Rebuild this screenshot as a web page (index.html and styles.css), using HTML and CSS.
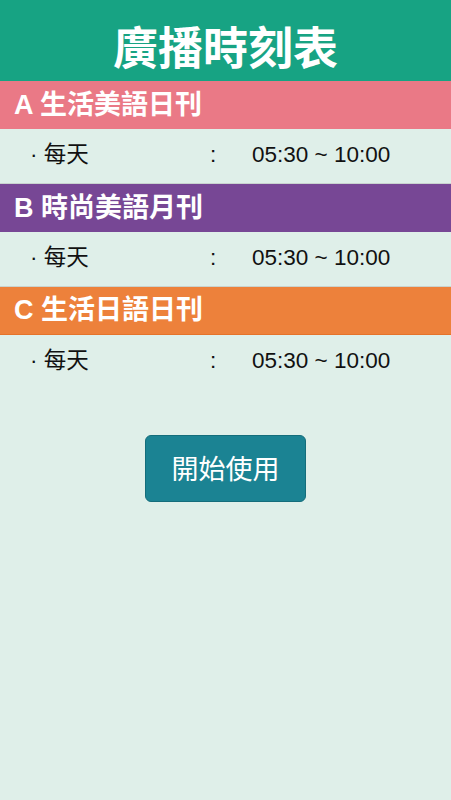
FILE: index.html
```html
<!DOCTYPE html>
<html lang="zh-Hant">
<head>
<meta charset="utf-8">
<title>廣播時刻表</title>
<link rel="stylesheet" href="styles.css">
</head>
<body>
<div class="page">
  <header class="header"><h1>廣播時刻表</h1></header>

  <section class="program">
    <h2 class="bar bar-a">A 生活美語日刊</h2>
    <div class="row"><span class="day">· 每天</span><span class="colon">:</span><span class="time">05:30 ~ 10:00</span></div>
  </section>

  <section class="program">
    <h2 class="bar bar-b">B 時尚美語月刊</h2>
    <div class="row"><span class="day">· 每天</span><span class="colon">:</span><span class="time">05:30 ~ 10:00</span></div>
  </section>

  <section class="program">
    <h2 class="bar bar-c">C 生活日語日刊</h2>
    <div class="row last"><span class="day">· 每天</span><span class="colon">:</span><span class="time">05:30 ~ 10:00</span></div>
  </section>

  <div class="actions"><button class="start">開始使用</button></div>
</div>
</body>
</html>
```
FILE: styles.css
```css
html, body {
  margin: 0;
  padding: 0;
  background: #dfefe9;
}
body {
  font-family: "Liberation Sans", "Noto Sans CJK TC", sans-serif;
  color: #111;
}
.page {
  width: 451px;
  min-height: 800px;
  display: flex;
  flex-direction: column;
}
.header {
  background: #17a383;
  height: 81px;
  box-sizing: border-box;
  padding-top: 18px;
  display: flex;
  justify-content: center;
  align-items: center;
}
.header h1 {
  margin: 0;
  color: #fff;
  font-size: 45px;
  font-weight: bold;
  letter-spacing: 0;
  line-height: 1;
}
.bar {
  margin: 0;
  height: 48px;
  box-sizing: border-box;
  padding-left: 14px;
  display: flex;
  align-items: center;
  color: #fff;
  font-size: 27px;
  font-weight: bold;
  line-height: 1;
}
.bar-a { background: #ea7986; }
.bar-b { background: #774795; }
.bar-c { background: #ed813b; border-bottom: 1px solid #e5732a; }
.row {
  height: 55px;
  box-sizing: border-box;
  display: flex;
  align-items: center;
  font-size: 22.5px;
  line-height: 1;
  border-bottom: 1px solid #c9d3cf;
  padding-bottom: 2px;
}
.row.last { border-bottom: none; }
.day {
  width: 180px;
  padding-left: 30px;
  box-sizing: content-box;
}
.colon {
  width: 42px;
}
.time {
  font-family: "Liberation Sans", sans-serif;
}
.actions {
  display: flex;
  justify-content: center;
  padding-top: 45px;
}
.start {
  width: 161px;
  height: 67px;
  background: #1b8393;
  border: 1px solid #146d7b;
  border-radius: 6px;
  color: #fff;
  font-family: "Noto Sans CJK TC", sans-serif;
  font-size: 27px;
  font-weight: normal;
  padding: 0 0 3px;
}
```
